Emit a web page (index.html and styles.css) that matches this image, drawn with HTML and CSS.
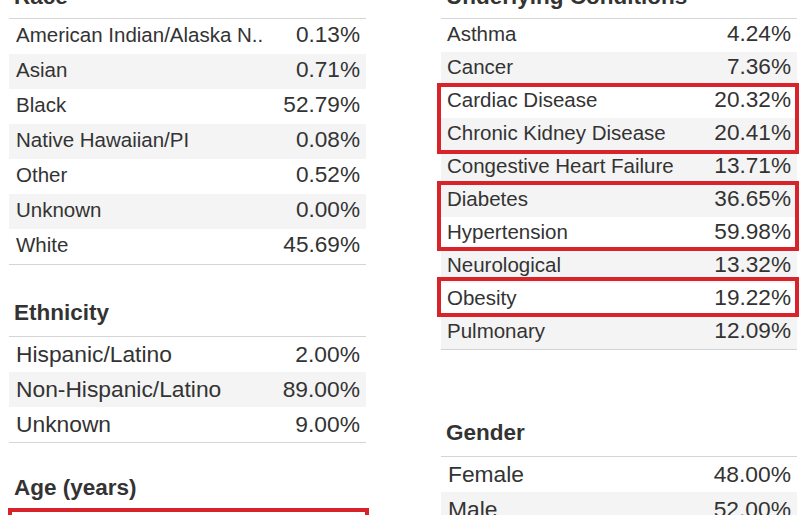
FILE: index.html
```html
<!DOCTYPE html>
<html lang="en">
<head>
<meta charset="utf-8">
<title>Demographics</title>
<link rel="stylesheet" href="styles.css">
</head>
<body>
<div class="page">
  <div class="col col-left">
    <section class="block">
      <h3 class="title">Race</h3>
      <div class="table">
        <div class="row"><span class="lbl">American Indian/Alaska N..</span><span class="val">0.13%</span></div>
        <div class="row"><span class="lbl">Asian</span><span class="val">0.71%</span></div>
        <div class="row"><span class="lbl">Black</span><span class="val">52.79%</span></div>
        <div class="row"><span class="lbl">Native Hawaiian/PI</span><span class="val">0.08%</span></div>
        <div class="row"><span class="lbl">Other</span><span class="val">0.52%</span></div>
        <div class="row"><span class="lbl">Unknown</span><span class="val">0.00%</span></div>
        <div class="row"><span class="lbl">White</span><span class="val">45.69%</span></div>
      </div>
    </section>
    <section class="block block-eth">
      <h3 class="title">Ethnicity</h3>
      <div class="table table-lg">
        <div class="row"><span class="lbl">Hispanic/Latino</span><span class="val">2.00%</span></div>
        <div class="row"><span class="lbl">Non-Hispanic/Latino</span><span class="val">89.00%</span></div>
        <div class="row"><span class="lbl">Unknown</span><span class="val">9.00%</span></div>
      </div>
    </section>
    <section class="block block-age">
      <h3 class="title">Age (years)</h3>
      <div class="table table-lg">
        <div class="hl hl-age">
          <div class="row row-empty"></div>
          <div class="row row-empty"></div>
        </div>
      </div>
    </section>
  </div>
  <div class="col col-right">
    <section class="block">
      <h3 class="title">Underlying Conditions</h3>
      <div class="table table-sm">
        <div class="row"><span class="lbl">Asthma</span><span class="val">4.24%</span></div>
        <div class="row"><span class="lbl">Cancer</span><span class="val">7.36%</span></div>
        <div class="hl hl-1">
          <div class="row"><span class="lbl">Cardiac Disease</span><span class="val">20.32%</span></div>
          <div class="row"><span class="lbl">Chronic Kidney Disease</span><span class="val">20.41%</span></div>
        </div>
        <div class="row"><span class="lbl">Congestive Heart Failure</span><span class="val">13.71%</span></div>
        <div class="hl hl-2">
          <div class="row"><span class="lbl">Diabetes</span><span class="val">36.65%</span></div>
          <div class="row"><span class="lbl">Hypertension</span><span class="val">59.98%</span></div>
        </div>
        <div class="row"><span class="lbl">Neurological</span><span class="val">13.32%</span></div>
        <div class="hl hl-3">
          <div class="row"><span class="lbl">Obesity</span><span class="val">19.22%</span></div>
        </div>
        <div class="row"><span class="lbl">Pulmonary</span><span class="val">12.09%</span></div>
      </div>
    </section>
    <section class="block block-gender">
      <h3 class="title">Gender</h3>
      <div class="table table-lg">
        <div class="row"><span class="lbl">Female</span><span class="val">48.00%</span></div>
        <div class="row"><span class="lbl">Male</span><span class="val">52.00%</span></div>
      </div>
    </section>
  </div>
</div>
</body>
</html>
```

FILE: styles.css
```css
html, body {
  margin: 0;
  padding: 0;
  background: #ffffff;
  overflow: hidden;
}

body {
  font-family: "Liberation Sans", Arial, sans-serif;
  color: #333333;
}

.page {
  display: flex;
  gap: 75px;
  padding-left: 9px;
  margin-top: -16px;
}

.col-left {
  width: 357px;
}

.col-right {
  width: 356px;
}

.block-eth {
  margin-top: 35px;
}

.block-age {
  margin-top: 32px;
}

.block-gender {
  margin-top: 70px;
}

.title {
  margin: 0 0 8px;
  padding-left: 5px;
  font-size: 22.5px;
  line-height: 26px;
  font-weight: bold;
  color: #333333;
}

.block-eth .title,
.block-gender .title {
  margin-bottom: 10px;
}

.table {
  border-top: 1px solid #d4d4d4;
  border-bottom: 1px solid #d4d4d4;
}

.row {
  display: flex;
  justify-content: space-between;
  align-items: baseline;
  height: 35px;
  padding: 0 6px 0 7px;
  overflow: hidden;
}

.table > .row:nth-child(even),
.hl-1 > .row:nth-child(2),
.hl-2 > .row:nth-child(1),
.hl-age > .row:nth-child(2) {
  background: #f4f4f4;
}

.lbl {
  font-size: 20.5px;
  line-height: 32px;
  white-space: nowrap;
}

.val {
  font-size: 22.6px;
  line-height: 32px;
  white-space: nowrap;
}

.table-lg .lbl,
.table-lg .val {
  font-size: 22.8px;
  line-height: 34px;
}

.table-sm .row {
  height: 33px;
  padding: 0 6px 0 6px;
}

.table-sm .lbl,
.table-sm .val {
  line-height: 29px;
}

.hl {
  position: relative;
}

.hl::after {
  content: "";
  position: absolute;
  border: 4.5px solid #d9232a;
  pointer-events: none;
}

.hl-1::after {
  top: -2px;
  bottom: -3px;
  left: -4px;
  right: -2px;
}

.hl-2::after {
  top: -3px;
  bottom: -1px;
  left: -4px;
  right: -2px;
}

.hl-3::after {
  top: -6px;
  bottom: -1px;
  left: -4px;
  right: -2px;
}

.hl-age::after {
  top: -2px;
  bottom: -2px;
  left: -1px;
  right: -3px;
}
```
